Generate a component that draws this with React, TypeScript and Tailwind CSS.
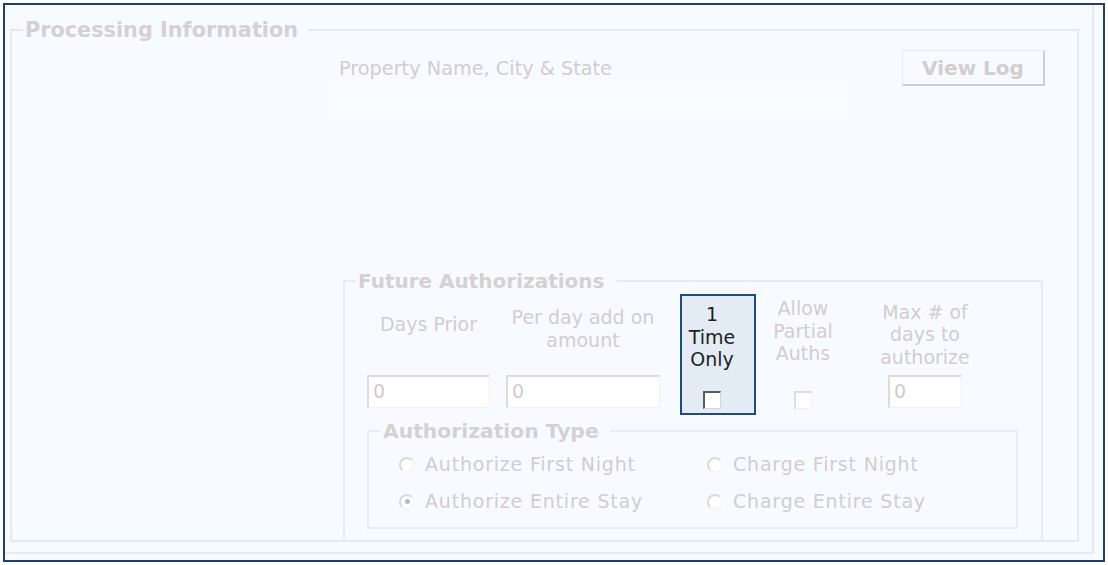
import React from "react";

const Input = ({ w }: { w: string }) => (
  <div
    className={`${w} h-[33px] bg-white border-t-2 border-l-2 border-r border-b border-t-[#dcdcdc] border-l-[#dcdcdc] border-r-[#f1f1f1] border-b-[#f1f1f1] pl-[4px] text-[19px] leading-[29px] text-[#d0cbcb]`}
  >
    0
  </div>
);

const Radio = ({ checked }: { checked?: boolean }) => (
  <div className="w-[16px] h-[16px] rounded-full bg-white border-2 border-t-[#dadada] border-l-[#dadada] border-r-[#f4f6f8] border-b-[#f4f6f8] flex items-center justify-center shrink-0">
    {checked ? <div className="w-[5px] h-[5px] rounded-full bg-[#b9b9b9]" /> : null}
  </div>
);

export default function App() {
  const label = "text-[19px] text-[#d3cdcd]";
  return (
    <div className="w-[1108px] h-[565px] bg-white p-[3px] font-['DejaVu_Sans',sans-serif]">
      <div className="h-[559px] border-2 border-[#1d416f] bg-[#f7fbff]">
        <div className="w-[1089px] h-[549px] border-r-2 border-b-2 border-[#e6ecf3] pl-[5px] pt-[13px]">
          <fieldset className="w-[1069px] h-[524px] border-2 border-[#e4eaf1]">
            <legend className="ml-[11px] pl-[2px] pr-[10px] text-[20.8px] leading-[24px] font-bold text-[#d6d1d1]">
              Processing Information
            </legend>

            <div className="flex mt-[8px] ml-[314px]">
              <div className="w-[524px]">
                <div className={`pl-[13px] mt-[7px] leading-[23px] text-[19.3px] text-[#d3cdcd]`}>
                  Property Name, City &amp; State
                </div>
                <div className="mt-[7px] h-[35px] bg-[#f9fcff]" />
              </div>
              <div className="ml-[52px] w-[143px] h-[36px] border-t border-l border-t-[#e6eaee] border-l-[#e6eaee] border-r-2 border-b-2 border-r-[#cfcfcf] border-b-[#cfcfcf] flex items-center justify-center text-[20px] font-bold text-[#d3cece]">
                View Log
              </div>
            </div>

            <fieldset className="mt-[147px] ml-[331px] w-[700px] h-[271px] border-2 border-b-0 border-[#e6ecf2]">
              <legend className="ml-[11px] pl-[2px] pr-[12px] text-[20px] leading-[24px] font-bold text-[#d6d1d1]">
                Future Authorizations
              </legend>

              <div className="flex items-start">
                <div className="ml-[22px] w-[123px] flex flex-col">
                  <div className={`mt-[20px] leading-[23px] text-center ${label}`}>Days Prior</div>
                  <div className="mt-[39px]">
                    <Input w="w-[123px]" />
                  </div>
                </div>
                <div className="ml-[16px] w-[154px] flex flex-col">
                  <div className={`mt-[13px] leading-[23px] text-center ${label}`}>
                    Per day add on
                    <br />
                    amount
                  </div>
                  <div className="mt-[23px]">
                    <Input w="w-[154px]" />
                  </div>
                </div>
                <div className="ml-[20px] mt-[1px] w-[76px] h-[121px] border-2 border-[#1f4b80] bg-[#e3ebf5] pr-[12px] flex flex-col items-center">
                  <div className="pt-[7px] text-[19px] leading-[22.5px] text-center text-[#1f1f1f]">
                    1
                    <br />
                    Time
                    <br />
                    Only
                  </div>
                  <div className="mt-[20px] w-[18px] h-[18px] bg-white border-t-2 border-l-2 border-r border-b border-t-[#5a5a5a] border-l-[#5a5a5a] border-r-[#d6d6d6] border-b-[#d6d6d6]" />
                </div>
                <div className="w-[94px] flex flex-col items-center">
                  <div className={`mt-[4px] leading-[22.5px] text-center ${label}`}>
                    Allow
                    <br />
                    Partial
                    <br />
                    Auths
                  </div>
                  <div className="mt-[26px] w-[18px] h-[18px] bg-white border-t-2 border-l-2 border-r border-b border-t-[#dedede] border-l-[#dedede] border-r-[#f0f0f0] border-b-[#f0f0f0]" />
                </div>
                <div className="w-[150px] flex flex-col items-center">
                  <div className={`mt-[7.5px] leading-[22.5px] text-center ${label}`}>
                    Max # of
                    <br />
                    days to
                    <br />
                    authorize
                  </div>
                  <div className="mt-[7px]">
                    <Input w="w-[74px]" />
                  </div>
                </div>
              </div>

              <fieldset className="mt-[4px] ml-[22px] w-[651px] h-[110px] border-2 border-[#e7edf3]">
                <legend className="ml-[12px] pl-[2px] pr-[11px] text-[20.3px] leading-[24px] font-bold text-[#d6d1d1]">
                  Authorization Type
                </legend>
                <div className="pt-[3px] pl-[30px] grid grid-cols-[308px_1fr]">
                  <div className="h-[37px] flex items-center">
                    <Radio />
                    <span className={`ml-[10px] tracking-[0.8px] ${label}`}>Authorize First Night</span>
                  </div>
                  <div className="h-[37px] flex items-center">
                    <Radio />
                    <span className={`ml-[10px] tracking-[0.8px] ${label}`}>Charge First Night</span>
                  </div>
                  <div className="h-[37px] flex items-center">
                    <Radio checked />
                    <span className={`ml-[10px] tracking-[0.8px] ${label}`}>Authorize Entire Stay</span>
                  </div>
                  <div className="h-[37px] flex items-center">
                    <Radio />
                    <span className={`ml-[10px] tracking-[0.8px] ${label}`}>Charge Entire Stay</span>
                  </div>
                </div>
              </fieldset>
            </fieldset>
          </fieldset>
        </div>
      </div>
    </div>
  );
}
